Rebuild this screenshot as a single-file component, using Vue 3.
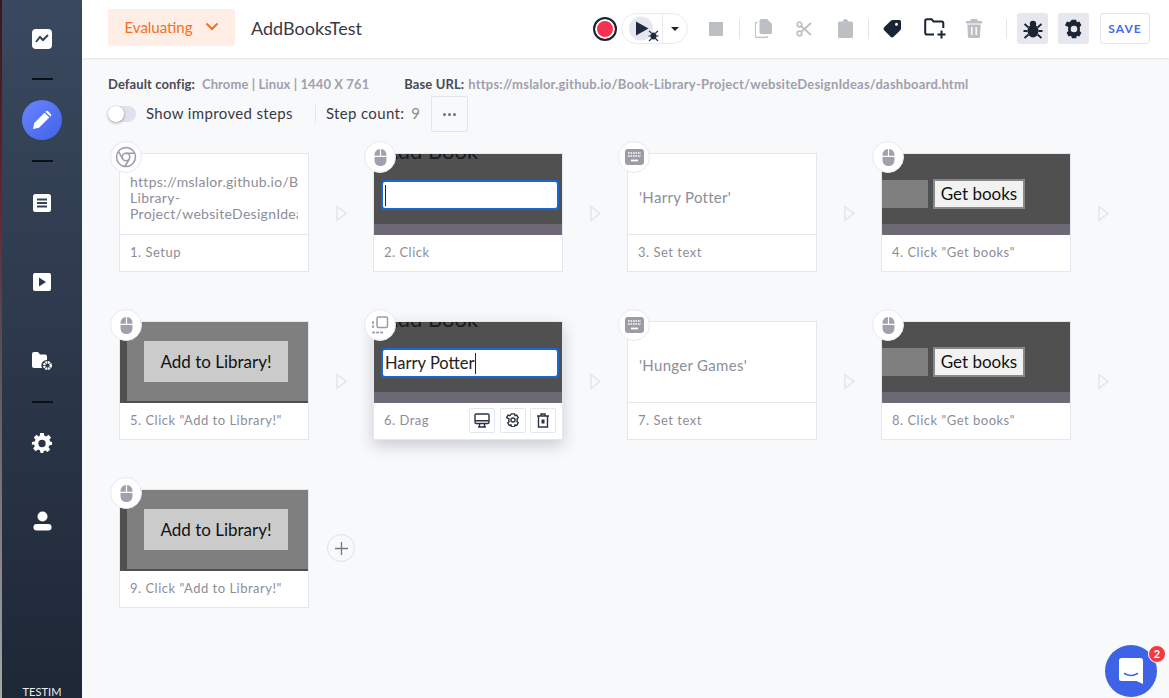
<script setup>
const steps = [
  { id: 1, label: '1. Setup', icon: 'chrome', view: 'url' },
  { id: 2, label: '2. Click', icon: 'mouse', view: 'input', value: '' },
  { id: 3, label: '3. Set text', icon: 'keyboard', view: 'text', value: "'Harry Potter'" },
  { id: 4, label: '4. Click "Get books"', icon: 'mouse', view: 'books' },
  { id: 5, label: '5. Click "Add to Library!"', icon: 'mouse', view: 'library' },
  { id: 6, label: '6. Drag', icon: 'drag', view: 'input', value: 'Harry Potter', active: true },
  { id: 7, label: '7. Set text', icon: 'keyboard', view: 'text', value: "'Hunger Games'" },
  { id: 8, label: '8. Click "Get books"', icon: 'mouse', view: 'books' },
  { id: 9, label: '9. Click "Add to Library!"', icon: 'mouse', view: 'library', last: true }
];
</script>

<template>
  <div class="page">
    <div class="edge"></div>
    <aside class="sidebar">
      <div class="side-slot h78">
        <svg width="20" height="20" viewBox="0 0 20 20"><rect width="20" height="20" rx="4" fill="#fff" /><path d="M4 13l4-5 3 3 5-5" fill="none" stroke="#33425a" stroke-width="2" /></svg>
      </div>
      <div class="side-line"></div>
      <div class="side-active">
        <svg width="22" height="22" viewBox="0 0 22 22"><path d="M2 20l1.200-6L13.500 3.700l4.800 4.800L8 18.800z M15 2.200a1.500 1.500 0 0 1 2.100 0l2.700 2.700a1.500 1.500 0 0 1 0 2.100l-.6.6-4.800-4.800z" fill="#fff" /></svg>
      </div>
      <div class="side-line"></div>
      <div class="side-slot h82">
        <svg width="18" height="18" viewBox="0 0 18 18"><rect width="18" height="18" rx="2.500" fill="#fff" /><path d="M4 5.500h10M4 9h10M4 12.500h10" stroke="#33425a" stroke-width="1.800" /></svg>
      </div>
      <div class="side-slot h76">
        <svg width="18" height="18" viewBox="0 0 18 18"><rect width="18" height="18" rx="2" fill="#fff" /><path d="M6 4.500v9l7-4.500z" fill="#2c3a4f" /></svg>
      </div>
      <div class="side-slot h81">
        <svg width="22" height="20" viewBox="0 0 22 20"><path d="M1 3a2 2 0 0 1 2-2h4l2 2.500h5a2 2 0 0 1 2 2V9a5.500 5.500 0 0 0-5 8H3a2 2 0 0 1-2-2z" fill="#fff" /><circle cx="16.500" cy="14.500" r="3.300" fill="none" stroke="#fff" stroke-width="2.400" stroke-dasharray="2 .6" /></svg>
      </div>
      <div class="side-line"></div>
      <div class="side-slot h80">
        <svg width="22" height="22" viewBox="0 0 24 24"><path fill="#fff" fill-rule="evenodd" d="M10 1h4l.6 3.100 1.900.8 2.600-1.800 2.800 2.800-1.800 2.600.8 1.900L23 11v3l-3.100.6-.8 1.900 1.800 2.600-2.800 2.800-2.600-1.800-1.900.8L13.500 23h-3l-.9-3.100-1.900-.8-2.600 1.800-2.800-2.800 1.800-2.600-.8-1.900L1 14v-3l3.100-.6.800-1.900L3.100 5.900l2.800-2.800 2.600 1.800 1-.8zM12 8.500a4 4 0 1 0 0 8 4 4 0 0 0 0-8z" /></svg>
      </div>
      <div class="side-slot h76">
        <svg width="19" height="20" viewBox="0 0 19 20"><circle cx="9.500" cy="5.500" r="5" fill="#fff" /><rect x="0.500" y="13" width="18" height="6.500" rx="3.200" fill="#fff" /></svg>
      </div>
      <div class="brand">TESTIM</div>
    </aside>

    <div class="content">
      <header class="topbar">
        <button class="status">Evaluating
          <svg width="14" height="9" viewBox="0 0 14 9"><path d="M1.500 1.500L7 7l5.500-5.500" fill="none" stroke="#f6701e" stroke-width="2" /></svg>
        </button>
        <span class="test-name">AddBooksTest</span>

        <div class="tools">
          <span class="record"></span>
          <div class="play-pill">
            <span class="play-main">
              <svg width="40" height="29" viewBox="0 0 40 29"><circle cx="19" cy="14.500" r="12" fill="#e6e7ef" /><path d="M14 7.500v14l12.500-7z" fill="#1f2a3c" /><ellipse cx="31.500" cy="22" rx="3" ry="3.500" fill="#1f2a3c" /><path d="M27 17l2.500 2M36 17l-2.500 2M26.500 22h3M33.500 22h3M27 27l2.500-2.500M36 27l-2.500-2.500" stroke="#1f2a3c" stroke-width="1.100" /></svg>
            </span>
            <span class="play-more"><i></i></span>
          </div>
          <span class="tool ml16"><i class="stop"></i></span>
          <span class="sep"></span>
          <span class="tool">
            <svg width="17" height="19" viewBox="0 0 17 19"><path d="M6 0h6l5 5v8.500a1.500 1.500 0 0 1-1.500 1.500H6a1.500 1.500 0 0 1-1.500-1.500v-12A1.500 1.500 0 0 1 6 0z" fill="#bcc0c4" /><path d="M2.500 3.500H1.700A1.500 1.500 0 0 0 .2 5v12a1.500 1.500 0 0 0 1.500 1.500h9a1.500 1.500 0 0 0 1.500-1.500" fill="none" stroke="#bcc0c4" stroke-width="1.400" /></svg>
          </span>
          <span class="tool ml17">
            <svg width="16" height="16" viewBox="0 0 16 16"><circle cx="3.500" cy="3.500" r="2.300" fill="none" stroke="#bcc0c4" stroke-width="1.700" /><circle cx="3.500" cy="12.500" r="2.300" fill="none" stroke="#bcc0c4" stroke-width="1.700" /><path d="M5 5l10 9M5 11l10-9" stroke="#bcc0c4" stroke-width="1.700" /></svg>
          </span>
          <span class="tool ml17">
            <svg width="15" height="19" viewBox="0 0 15 19"><path d="M1.500 2.500H5a2.500 2.500 0 0 1 5 0h3.500A1.500 1.500 0 0 1 15 4v13.500a1.500 1.500 0 0 1-1.500 1.500h-12A1.500 1.500 0 0 1 0 17.500V4a1.500 1.500 0 0 1 1.500-1.500z" fill="#bcc0c4" /></svg>
          </span>
          <span class="sep"></span>
          <span class="tool">
            <svg width="19" height="19" viewBox="0 0 19 19"><path fill="#1b2433" fill-rule="evenodd" d="M9.500 1H16.500a1.500 1.500 0 0 1 1.500 1.500V9.500a2.500 2.500 0 0 1-.7 1.700l-6.400 6.400a2.500 2.500 0 0 1-3.500 0l-6-6a2.500 2.500 0 0 1 0-3.500L7.800 1.700A2.500 2.500 0 0 1 9.500 1zM13.500 3.800a1.500 1.500 0 1 0 0 3 1.500 1.500 0 0 0 0-3z" /></svg>
          </span>
          <span class="tool ml19">
            <svg width="23" height="21" viewBox="0 0 23 21"><path d="M10 16.500H3a1.800 1.800 0 0 1-1.800-1.800V3A1.800 1.800 0 0 1 3 1.200h4.500l2 2.300h8A1.800 1.800 0 0 1 19.300 5.300V10" fill="none" stroke="#1b2433" stroke-width="2" /><path d="M17.500 12.500v8M13.500 16.500h8" stroke="#1b2433" stroke-width="2" /></svg>
          </span>
          <span class="tool ml15">
            <svg width="16" height="19" viewBox="0 0 16 19"><path fill="#bcc0c4" fill-rule="evenodd" d="M5 0h6l1 2h4v2.500H0V2h4zM1.300 5.500h13.400L14 18a1 1 0 0 1-1 1H3a1 1 0 0 1-1-1z" /><path d="M5.800 8v8M10.200 8v8" stroke="#fff" stroke-width="1.400" /></svg>
          </span>
          <span class="sep wide"></span>
          <span class="tool-box">
            <svg width="20" height="20" viewBox="0 0 20 20"><ellipse cx="10" cy="12" rx="5.500" ry="6.500" fill="#1b2433" /><circle cx="10" cy="5" r="3.200" fill="#1b2433" /><path d="M1.500 5l4 3.500M18.500 5l-4 3.500M.5 12h4M19.500 12h-4M1.500 19l4-3.500M18.500 19l-4-3.500" stroke="#1b2433" stroke-width="1.800" /></svg>
          </span>
          <span class="tool-box ml10">
            <svg width="20" height="20" viewBox="0 0 24 24"><path fill="#1b2433" fill-rule="evenodd" d="M9.500 1h5l1 3 2.900-.9 2.500 4.300-2.100 2.200a8 8 0 0 1 0 4.800l2.100 2.200-2.500 4.300-2.900-.9-1 3h-5l-1-3-2.900.9-2.500-4.300 2.100-2.200a8 8 0 0 1 0-4.800L1.100 7.400l2.500-4.300 2.900.9zM12 8a4 4 0 1 0 0 8 4 4 0 0 0 0-8z" /></svg>
          </span>
          <button class="save">SAVE</button>
        </div>
      </header>

      <main class="main">
        <div class="config-row">
          <b>Default config:</b><span class="cfg-val">Chrome | Linux | 1440 X 761</span>
          <b class="base">Base URL:</b><span class="cfg-url">https://mslalor.github.io/Book-Library-Project/websiteDesignIdeas/dashboard.html</span>
        </div>
        <div class="options-row">
          <span class="toggle"><i></i></span>
          <span class="opt-label">Show improved steps</span>
          <span class="opt-sep"></span>
          <span class="opt-label">Step count:</span>
          <span class="opt-count">9</span>
          <button class="more"><i></i><i></i><i></i></button>
        </div>

        <div class="steps">
          <div v-for="step in steps" :key="step.id" class="cell">
            <div class="card" :class="{ active: step.active }">
              <div class="badge">
                <svg v-if="step.icon === 'chrome'" width="22" height="22" viewBox="0 0 22 22" fill="none" stroke="#9c9ca8" stroke-width="1.500"><circle cx="11" cy="11" r="9.500" /><circle cx="11" cy="11" r="3.800" /><path d="M11 7.200h8.800M7.800 13L3.400 5.400M14.300 13l-4.400 7.500" /></svg>
                <svg v-else-if="step.icon === 'mouse'" width="13" height="17" viewBox="0 0 14 20" fill="#a0a0ae"><path d="M6.300 0v8H0V6.500A6.500 6.500 0 0 1 6.300 0zM7.700 0A6.500 6.500 0 0 1 14 6.500V8H7.700z" /><path d="M0 9.400h14v4.100a7 6.500 0 0 1-14 0z" /></svg>
                <svg v-else-if="step.icon === 'keyboard'" width="19" height="16" viewBox="0 0 19 16"><rect width="19" height="16" rx="3" fill="#9c9ca8" /><path d="M3 4h13M3 7h13" stroke="#fff" stroke-width="1.600" stroke-dasharray="1.600 .9" /><path d="M6 11.500h7" stroke="#fff" stroke-width="1.800" /></svg>
                <svg v-else width="18" height="18" viewBox="0 0 18 18" fill="none" stroke="#9c9ca8"><rect x="6" y="1" width="10.500" height="10.500" rx="1.500" stroke-width="1.500" /><path d="M2 6v7M2 16.500h11" stroke-width="1.800" stroke-linecap="round" stroke-dasharray="1.200 2.800" /></svg>
              </div>

              <div class="view" :class="'view-' + step.view">
                <div v-if="step.view === 'url'" class="url-text">
                  <div>https://mslalor.github.io/Book-</div>
                  <div>Library-</div>
                  <div>Project/websiteDesignIdeas/dashboard.html</div>
                </div>
                <template v-else-if="step.view === 'input'">
                  <div class="add-title">Add Book</div>
                  <div class="fake-input">{{ step.value }}<i class="caret"></i></div>
                  <div class="band"></div>
                </template>
                <div v-else-if="step.view === 'text'" class="typed">{{ step.value }}</div>
                <template v-else-if="step.view === 'books'">
                  <div class="books-row">
                    <span class="books-field"></span>
                    <span class="books-btn">Get books</span>
                  </div>
                  <div class="band"></div>
                </template>
                <div v-else class="lib-inner"><span class="lib-btn">Add to Library!</span></div>
              </div>

              <div class="label">
                <span>{{ step.label }}</span>
                <div v-if="step.active" class="actions">
                  <span class="act">
                    <svg width="16" height="15" viewBox="0 0 16 15" fill="none" stroke="#2a3342" stroke-width="1.400"><rect x="1" y="1" width="14" height="9.500" rx="1.200" /><path d="M1 7.800h14M5.500 10.500v3M10.500 10.500v3M4 14h8" /></svg>
                  </span>
                  <span class="act">
                    <svg width="14" height="14" viewBox="0 0 24 24" fill="none" stroke="#2a3342" stroke-width="2.400"><path d="M9.500 1.500h5l1 3 2.900-.9 2.500 4.300-2.100 2.200a8 8 0 0 1 0 4.800l2.100 2.200-2.500 4.300-2.900-.9-1 3h-5l-1-3-2.900.9-2.500-4.300 2.100-2.200a8 8 0 0 1 0-4.800L1.100 7.900l2.500-4.300 2.900.9z" /><circle cx="12" cy="12" r="3.500" /></svg>
                  </span>
                  <span class="act">
                    <svg width="12" height="15" viewBox="0 0 12 15" fill="none" stroke="#2a3342" stroke-width="1.400"><path d="M0 3h12M4 3V1h4v2M1.500 3v11h9V3" /><path d="M4.500 6.500h3v4h-3z" fill="#2a3342" stroke="none" /></svg>
                  </span>
                </div>
              </div>
            </div>

            <svg v-if="!step.last" class="arrow" width="11" height="17" viewBox="0 0 11 17"><path d="M1 1.500l9 7-9 7z" fill="none" stroke="#dfe3ec" stroke-width="1.300" /></svg>
            <button v-else class="add">
              <svg width="13" height="13" viewBox="0 0 13 13"><path d="M6.500 0v13M0 6.500h13" stroke="#777785" stroke-width="1.300" /></svg>
            </button>
          </div>
        </div>
      </main>
    </div>

    <div class="chat">
      <svg width="24" height="26" viewBox="0 0 24 26"><path d="M2.500 0h19A2.500 2.500 0 0 1 24 2.500V26l-6.500-3H2.500A2.500 2.500 0 0 1 0 20.500v-18A2.500 2.500 0 0 1 2.500 0z" fill="#fff" /><path d="M5.500 15.500c4 2.500 9 2.500 13 0" fill="none" stroke="#3f63e6" stroke-width="1.500" stroke-linecap="round" /></svg>
      <span class="chat-badge">2</span>
    </div>
  </div>
</template>

<style>
html, body {
  margin: 0;
  height: 100%;
  overflow: hidden;
  background: #f8f9fb;
}
</style>

<style scoped>
.page {
  position: relative;
  display: flex;
  width: 1169px;
  height: 698px;
  overflow: hidden;
  font-family: "Lato", "Open Sans", sans-serif;
  color: #333;
  background: #f8f9fb;
}

/* sliver of the desktop showing left of the window */
.edge {
  width: 2px;
  flex-shrink: 0;
  background: linear-gradient(#3a1620 0%, #6a2430 30%, #55505a 50%, #a8a8a8 100%);
}

.sidebar {
  width: 80px;
  flex-shrink: 0;
  display: flex;
  flex-direction: column;
  align-items: center;
  box-sizing: border-box;
  background: linear-gradient(#3a495f, #1e2736);
}

.side-slot {
  display: flex;
  flex-shrink: 0;
  align-items: center;
  justify-content: center;
}

.h76 { height: 76px; }
.h78 { height: 78px; }
.h80 { height: 80px; }
.h81 { height: 81px; }
.h82 { height: 82px; }

.side-line {
  width: 21px;
  height: 2px;
  flex-shrink: 0;
  background: #0c1118;
}

.side-active {
  width: 40px;
  height: 40px;
  flex-shrink: 0;
  margin: 20px 0;
  border-radius: 50%;
  background: linear-gradient(135deg, #6b84ff, #3f63e6);
  display: flex;
  align-items: center;
  justify-content: center;
}

.brand {
  margin-top: auto;
  font-size: 11px;
  line-height: 12px;
  letter-spacing: 0.1px;
  color: #e8ebf0;
}

.content {
  flex: 1;
  min-width: 0;
  display: flex;
  flex-direction: column;
}

.topbar {
  height: 58px;
  flex-shrink: 0;
  display: flex;
  align-items: center;
  padding: 0 19px 0 26px;
  background: #fff;
  box-shadow: 0 1px 2px rgba(30, 40, 60, 0.1);
}

.status {
  width: 127px;
  height: 37px;
  margin-top: -3px;
  padding: 0 0 2px;
  display: flex;
  align-items: center;
  justify-content: center;
  gap: 12px;
  border: 0;
  border-radius: 3px;
  background: #feeee5;
  color: #f6701e;
  font-family: inherit;
  font-size: 15px;
}

.test-name {
  margin-left: 16px;
  margin-top: -3px;
  font-size: 18px;
  color: #3a3a44;
}

.tools {
  margin-left: auto;
  display: flex;
  align-items: center;
  margin-top: -1px;
}

.record {
  width: 24px;
  height: 24px;
  box-sizing: border-box;
  border: 2px solid #1b2433;
  border-radius: 50%;
  background: #f5324f;
  box-shadow: inset 0 0 0 2px #fff;
}

.play-pill {
  width: 67px;
  height: 31px;
  margin-left: 4px;
  box-sizing: border-box;
  display: flex;
  align-items: center;
  border: 1px solid #e9ebf3;
  border-radius: 16px;
}

.play-main {
  width: 41px;
  height: 29px;
  box-sizing: border-box;
  display: flex;
  border-right: 1px solid #e9ebf3;
}

.play-more {
  flex: 1;
  display: flex;
  justify-content: center;
}

.play-more i {
  border: 4px solid transparent;
  border-top-color: #1b2433;
  border-bottom-width: 0;
}

.tool {
  width: 24px;
  height: 24px;
  display: flex;
  align-items: center;
  justify-content: center;
}

.ml15 { margin-left: 15px; }
.ml16 { margin-left: 16px; }
.ml17 { margin-left: 17px; }
.ml19 { margin-left: 19px; }
.ml10 { margin-left: 10px; }

.stop {
  width: 14px;
  height: 14px;
  background: #bcc0c4;
}

.sep {
  width: 1px;
  height: 20px;
  margin: 0 11px;
  background: #e4e6ee;
}

.sep.wide {
  margin: 0 10px 0 20px;
}

.tool-box {
  width: 31px;
  height: 31px;
  border-radius: 3px;
  background: #e6e7ef;
  display: flex;
  align-items: center;
  justify-content: center;
}

.save {
  width: 50px;
  height: 31px;
  margin-left: 11px;
  padding: 0;
  box-sizing: border-box;
  border: 1px solid #e2e5f0;
  border-radius: 3px;
  background: #fff;
  color: #4569f0;
  font-family: inherit;
  font-size: 12px;
  font-weight: 700;
  letter-spacing: 1px;
}

.main {
  flex: 1;
  padding: 0 0 0 26px;
}

.config-row {
  margin-top: 18px;
  display: flex;
  font-size: 13px;
  line-height: 16px;
  letter-spacing: 0.1px;
  white-space: nowrap;
}

.config-row b {
  color: #4a4a54;
  font-weight: 700;
}

.cfg-val {
  margin-left: 7px;
  color: #a0a0ac;
  font-weight: 700;
}

.config-row .base {
  margin-left: 35px;
}

.cfg-url {
  margin-left: 4px;
  letter-spacing: 0.23px;
  color: #a0a0ac;
  font-weight: 700;
}

.options-row {
  height: 36px;
  margin-top: 4px;
  display: flex;
  align-items: center;
}

.toggle {
  position: relative;
  width: 28px;
  height: 16px;
  border-radius: 8px;
  background: #dfe1ec;
}

.toggle i {
  position: absolute;
  left: 0;
  top: 0;
  width: 16px;
  height: 16px;
  border-radius: 50%;
  background: #fff;
  box-shadow: 0 1px 3px rgba(0, 0, 0, 0.35);
}

.opt-label {
  margin-left: 10px;
  margin-top: -2px;
  font-size: 15px;
  letter-spacing: 0.35px;
  color: #3a3a44;
}

.opt-sep {
  width: 1px;
  height: 18px;
  margin-left: 22px;
  background: #e4e6ee;
}

.opt-count {
  margin-left: 7px;
  margin-top: -2px;
  font-size: 15px;
  color: #8a8a96;
}

.more {
  width: 37px;
  height: 36px;
  margin-left: 11px;
  padding: 0;
  display: flex;
  align-items: center;
  justify-content: center;
  gap: 2px;
  border: 1px solid #e3e5ee;
  border-radius: 2px;
  background: transparent;
}

.more i {
  width: 3px;
  height: 3px;
  border-radius: 50%;
  background: #70707e;
}

.steps {
  margin-top: 21px;
  margin-left: 11px;
  display: grid;
  grid-template-columns: repeat(4, 254px);
  row-gap: 49px;
}

.cell {
  position: relative;
  display: flex;
  align-items: flex-start;
}

.card {
  position: relative;
  width: 190px;
  height: 119px;
  box-sizing: border-box;
  display: flex;
  flex-direction: column;
  border: 1px solid #e3e7ef;
  background: #fff;
}

.card.active {
  box-shadow: 0 6px 14px rgba(40, 50, 80, 0.22);
}

.badge {
  position: absolute;
  z-index: 2;
  left: -10px;
  top: -13px;
  width: 32px;
  height: 32px;
  box-sizing: border-box;
  display: flex;
  align-items: center;
  justify-content: center;
  border: 1px solid #e6e9f0;
  border-radius: 50%;
  background: #fff;
}

.view {
  position: relative;
  height: 80px;
  flex-shrink: 0;
  overflow: hidden;
  border-bottom: 1px solid #e3e7ef;
}

.view-input,
.view-books,
.view-library {
  background: #505050;
  border-bottom: 0;
  height: 81px;
}

.url-text {
  margin: 20px 10px 0;
  overflow: hidden;
  font-size: 14px;
  line-height: 16px;
  letter-spacing: 0.3px;
  color: #8d8d99;
  white-space: nowrap;
}

.add-title {
  position: absolute;
  left: 9px;
  top: -16px;
  font-size: 22px;
  line-height: 26px;
  color: #1a1a1a;
}

.fake-input {
  position: absolute;
  left: 7px;
  right: 3px;
  top: 26px;
  height: 30px;
  box-sizing: border-box;
  padding-left: 2px;
  display: flex;
  align-items: center;
  border: 2px solid #1a66d6;
  border-radius: 4px;
  background: #fff;
  font-size: 16.500px;
  color: #222;
}

.caret {
  width: 1px;
  height: 21px;
  background: #222;
}

.band {
  position: absolute;
  left: 0;
  right: 0;
  bottom: 0;
  height: 11px;
  background: #6d6a75;
}

.typed {
  height: 100%;
  box-sizing: border-box;
  display: flex;
  align-items: center;
  padding: 6px 0 0 11px;
  font-size: 15px;
  letter-spacing: 0.3px;
  color: #8d8d99;
}

.books-row {
  display: flex;
  align-items: center;
  gap: 5px;
  padding-top: 25px;
}

.books-field {
  width: 46px;
  height: 28px;
  background: #7f7f7f;
}

.books-btn {
  width: 92px;
  height: 30px;
  box-sizing: border-box;
  padding-bottom: 2px;
  display: flex;
  align-items: center;
  justify-content: center;
  border: 2px solid #888;
  background: #f2f2f2;
  font-size: 17px;
  color: #111;
}

.lib-inner {
  height: 79px;
  margin-left: 7px;
  padding: 19px 0 0 17px;
  box-sizing: border-box;
  background: #7f7f7f;
}

.lib-btn {
  width: 144px;
  height: 41px;
  display: flex;
  align-items: center;
  justify-content: center;
  background: #cbcbcb;
  font-size: 17px;
  color: #111;
}

.label {
  flex: 1;
  min-height: 0;
  display: flex;
  align-items: center;
  justify-content: space-between;
  padding: 0 6px 2px 10px;
  font-size: 13px;
  letter-spacing: 0.5px;
  color: #8d8d99;
  white-space: nowrap;
}

.actions {
  display: flex;
  gap: 4.500px;
}

.act {
  width: 26px;
  height: 25px;
  box-sizing: border-box;
  display: flex;
  align-items: center;
  justify-content: center;
  border: 1px solid #e3e7ef;
  border-radius: 2px;
}

.arrow {
  margin: 52px 0 0 27px;
}

.add {
  width: 28px;
  height: 28px;
  margin: 45px 0 0 18px;
  padding: 0;
  display: flex;
  align-items: center;
  justify-content: center;
  border: 1px solid #dfe2ec;
  border-radius: 50%;
  background: transparent;
}

.chat {
  position: absolute;
  left: 1105px;
  top: 645px;
  width: 52px;
  height: 52px;
  border-radius: 50%;
  background: #3f63e6;
  display: flex;
  align-items: center;
  justify-content: center;
}

.chat-badge {
  position: absolute;
  right: -9px;
  top: 0;
  width: 18px;
  height: 18px;
  box-sizing: border-box;
  border: 1px solid #fff;
  border-radius: 50%;
  background: #f03a3f;
  color: #fff;
  font-size: 11px;
  font-weight: 700;
  line-height: 16px;
  text-align: center;
}
</style>
